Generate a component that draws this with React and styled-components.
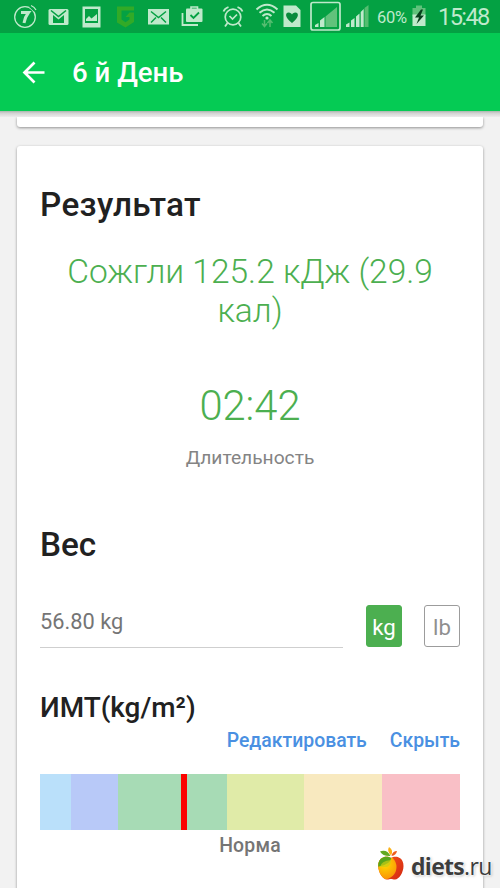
import React from "react";
import styled, { createGlobalStyle } from "styled-components";

const GlobalStyle = createGlobalStyle`
* {
  margin: 0;
  padding: 0;
  box-sizing: border-box;
}

body {
  background: #f2f2f2;
  font-family: Roboto, "Noto Sans", sans-serif;
  overflow: hidden;
}
`;

const Screen = styled.div`
  position: relative;
  display: flex;
  flex-direction: column;
  width: 500px;
  height: 888px;
  overflow: hidden;
  background: #f2f2f2;
`;

const StatusBar = styled.div`
  display: flex;
  align-items: center;
  flex: none;
  height: 33px;
  padding-left: 13px;
  background: #04a143;
  color: #bfe9cb;
`;

const Glyph = styled.svg`
  flex: none;
  display: block;
  height: 33px;
  width: ${(p) => p.$w}px;
  margin-right: ${(p) => p.$gap || 0}px;
  overflow: visible;
`;

const Percent = styled.span`
  width: 35px;
  font-size: 16.5px;
  line-height: 33px;
  padding-top: 1px;
  letter-spacing: -0.3px;
`;

const Clock = styled.span`
  font-size: 23.6px;
  line-height: 33px;
  letter-spacing: -1.6px;
  padding-top: 2px;
`;

const AppBar = styled.header`
  display: flex;
  align-items: center;
  flex: none;
  height: 78px;
  padding-left: 22px;
  background: #05cb54;
  color: #fff;
`;

const BarShadow = styled.div`
  flex: none;
  height: 6px;
  background: linear-gradient(#a9b5ad, #d2d2d2 35%, #ececec);
`;

const BarTitle = styled.h1`
  margin-left: 27px;
  padding-top: 2px;
  font-size: 27.6px;
  font-weight: 500;
  line-height: 34px;
`;

const Content = styled.main`
  display: flex;
  flex-direction: column;
  flex: 1;
  padding: 0 17px;
`;

const Card = styled.section`
  background: #fff;
  border-radius: 3px;
  box-shadow: 0 1px 3px rgba(0, 0, 0, 0.4);
`;

const PreviousCard = styled(Card)`
  flex: none;
  height: 10px;
  margin-bottom: 19px;
  border-radius: 0 0 3px 3px;
  clip-path: inset(0 -6px -6px -6px);
`;

const ResultCard = styled(Card)`
  height: 780px;
  padding: 39px 23px 0;
`;

const Heading = styled.h2`
  font-size: 33.3px;
  font-weight: 500;
  line-height: 40px;
  letter-spacing: ${(p) => p.$spacing || 0}px;
  color: #212121;
`;

const Burned = styled.p`
  margin-top: 27px;
  font-size: 33.5px;
  font-weight: 300;
  line-height: 39px;
  text-align: center;
  color: #4caf50;
`;

const Duration = styled.p`
  margin-top: 52px;
  font-size: 41.7px;
  font-weight: 300;
  line-height: 48px;
  text-align: center;
  color: #4caf50;
`;

const Caption = styled.p`
  margin: 16px 0 55px;
  font-size: 19.2px;
  line-height: 24px;
  text-align: center;
  color: #848484;
`;

const WeightRow = styled.div`
  display: flex;
  height: 43px;
  margin-top: 40px;
`;

const WeightValue = styled.div`
  flex: none;
  width: 303px;
  margin-right: 23px;
  padding-top: 4px;
  border-bottom: 1px solid #cfcfcf;
  font-size: 21.8px;
  line-height: 26px;
  color: #757575;
`;

const Unit = styled.button`
  flex: none;
  width: 36px;
  height: 42px;
  margin-right: 22px;
  border: 1px solid ${(p) => (p.$active ? "#4caf50" : "#9c9c9c")};
  border-radius: 3px;
  background: ${(p) => (p.$active ? "#4caf50" : "#fff")};
  color: ${(p) => (p.$active ? "#fff" : "#8f8f8f")};
  font-family: inherit;
  font-size: 22.2px;
  line-height: 26px;
  padding-top: 2px;

  &:last-child {
    margin-right: 0;
  }
`;

const BmiTitle = styled.h3`
  margin-top: 43px;
  font-size: 27.9px;
  font-weight: 500;
  line-height: 34px;
  color: #212121;
`;

const Links = styled.div`
  display: flex;
  justify-content: flex-end;
  gap: 23px;
  margin-top: 4px;
`;

const TextLink = styled.a`
  font-size: 19.4px;
  font-weight: 500;
  line-height: 24px;
  color: #4a90e2;
`;

const Scale = styled.div`
  position: relative;
  display: flex;
  height: 56px;
  margin-top: 21px;
`;

const Zone = styled.div`
  flex: ${(p) => p.$span};
  background: ${(p) => p.$color};
`;

const Marker = styled.div`
  position: absolute;
  top: 0;
  left: 141px;
  width: 6px;
  height: 100%;
  background: #fb0300;
`;

const ZoneName = styled.p`
  margin-top: 4px;
  font-size: 19.4px;
  font-weight: 500;
  line-height: 24px;
  letter-spacing: 0.2px;
  text-align: center;
  color: #757575;
`;

const Watermark = styled.div`
  position: absolute;
  left: 377px;
  top: 847px;
  display: flex;
  align-items: flex-start;
`;

const WatermarkText = styled.span`
  margin-left: 6px;
  padding-top: 5px;
  font-family: "Open Sans", sans-serif;
  font-size: 23px;
  line-height: 28px;
  letter-spacing: -0.7px;
  color: #3d3d3d;
  white-space: nowrap;
  text-shadow: 0 0 2px #fff, 0 0 2px #fff, 0 0 3px #fff, 1px 1px 3px #aaa;

  b {
    font-weight: 700;
  }
`;

const zones = [
  { span: 2, color: "#bae0fa" },
  { span: 3, color: "#b8c9f8" },
  { span: 7, color: "#a7dbb5" },
  { span: 5, color: "#e0eba8" },
  { span: 5, color: "#f8e9bf" },
  { span: 5, color: "#f9bfc6" },
];

function StatusIcons() {
  const c = "#bfe9cb";
  const bg = "#04a143";
  return (
    <>
      {/* seven */}
      <Glyph $w={24} $gap={11} viewBox="0 0 24 33">
        <circle cx="12" cy="17" r="10.3" fill="none" stroke={c} strokeWidth="1.3" />
        <path d="M17 6.5l5 4.5" stroke={bg} strokeWidth="2" />
        <path d="M18 5.5q3.5 1.5 5 4.5" stroke={c} strokeWidth="1.3" fill="none" />
        <path d="M8 12.5h7.500q-3.500 4.500-4.500 10.500" fill="none" stroke={c} strokeWidth="3" />
      </Glyph>
      {/* gmail */}
      <Glyph $w={21} $gap={13} viewBox="0 0 21 33">
        <rect x="0.500" y="9" width="20" height="16" rx="1.500" fill={c} />
        <path d="M3 10.500l7.500 6 7.500-6" fill="none" stroke={bg} strokeWidth="1.600" />
        <path d="M5 23V15l5.500 4.500L16 15v8z" fill={bg} />
      </Glyph>
      {/* picture */}
      <Glyph $w={19} $gap={15} viewBox="0 0 19 33">
        <path fillRule="evenodd" fill={c} d="M0.500 6.500h18v21h-18zM3 9v14h13V9z" />
        <path d="M4 21v-2l3-3 2.500 2.500 5.500-4.500v7z" fill={c} />
      </Glyph>
      {/* shield */}
      <Glyph $w={19} $gap={13} viewBox="0 0 19 33">
        <path
          d="M1 6.500h17v4H5.500v9l4 2.800 4-2.800v-2.500H9.500l4-4.500H18v9.500L9.500 27.500 1 22.500z"
          fill="#32aa27"
        />
      </Glyph>
      {/* mail */}
      <Glyph $w={21} $gap={12} viewBox="0 0 21 33">
        <rect x="0" y="9" width="21" height="15.500" fill={c} />
        <path d="M3 11.500l7.500 6 7.500-6M3 22.500l5-5M18 22.500l-5-5" fill="none" stroke={bg} strokeWidth="1.500" />
      </Glyph>
      {/* briefcase */}
      <Glyph $w={22} $gap={19} viewBox="0 0 22 33">
        <rect x="5" y="8.500" width="16.500" height="13.500" rx="1" fill={c} />
        <path d="M10 9V7h6.500v2" fill="none" stroke={c} strokeWidth="1.600" />
        <path d="M1.500 13v12h15.500" fill="none" stroke={c} strokeWidth="1.800" />
        <path d="M9.500 15l3 3 5.500-5.500" fill="none" stroke={bg} strokeWidth="1.800" />
      </Glyph>
      {/* alarm */}
      <Glyph $w={22} $gap={12} viewBox="0 0 22 33">
        <circle cx="11" cy="17" r="7.800" fill="none" stroke={c} strokeWidth="1.700" />
        <path d="M1.500 11.500q1-3 5-4.500M20.500 11.500q-1-3-5-4.500" fill="none" stroke={c} strokeWidth="1.800" />
        <path d="M5.500 23l-2.500 3.500M16.500 23l2.500 3.500" stroke={c} strokeWidth="1.800" />
        <path d="M7.500 16l3 3 4.500-4.500" fill="none" stroke={c} strokeWidth="1.700" />
      </Glyph>
      {/* wifi */}
      <Glyph $w={22} $gap={5} viewBox="0 0 22 33">
        <g fill="none" stroke={c} strokeWidth="2">
          <path d="M0.500 9.500q10.500-9.500 21 0" />
          <path d="M3.500 12.800q7.500-6.600 15 0" />
          <path d="M6.500 16q4.500-4 9 0" />
        </g>
        <circle cx="11" cy="18" r="1.600" fill={c} />
        <path d="M8.500 20v6M6 23.500l2.500 3 2.500-3M14 27v-6.500M11.500 23l2.500-3 2.500 3" fill="none" stroke="#55bd70" strokeWidth="1.500" />
      </Glyph>
      {/* sim with heart */}
      <Glyph $w={18} $gap={9} viewBox="0 0 18 33">
        <path d="M0.500 5.500h12.500l4.500 4.500v17h-17z" fill={c} />
        <path d="M9 23c-8-6-6.500-10.500-3.500-10.500 2 0 3 1.200 3.500 2 .5-.8 1.500-2 3.500-2 3 0 4.500 4.500-3.500 10.500z" fill="#078a3b" />
      </Glyph>
      {/* boxed signal */}
      <Glyph $w={31} $gap={5} viewBox="0 0 31 33">
        <rect x="1" y="2.500" width="29" height="27.500" rx="2" fill="none" stroke={c} strokeWidth="1.700" />
        <path d="M5 27v-2l3.500-2v4zM10 27v-6.500l4.500-3.500v10z" fill={c} />
        <path d="M15.500 16.500L27 7v20H15.500z" fill="#62c27c" />
      </Glyph>
      {/* signal */}
      <Glyph $w={23} $gap={8} viewBox="0 0 23 33">
        <path d="M0 27v-2.500l3.500-2V27zM5 27v-6.500l3.500-2.500v9zM10 27V16.500l3.500-3V27zM14.700 27V12l3-3v18z" fill={c} />
        <path d="M18.500 27V8l4-3v22z" fill="#55bd70" />
      </Glyph>
    </>
  );
}

function BatteryIcon() {
  return (
    <Glyph $w={14} $gap={12} viewBox="0 0 14 33">
      <path d="M4 5.500h6V8h3.500v8H0.500V8H4z" fill="#5fc27b" />
      <rect x="0.500" y="14.500" width="13" height="11.500" fill="#bfe9cb" />
      <path d="M9 9.500L3 17.500h4l-2.500 6.500L12 15.500H8.500L11 9.500z" fill="#073f1c" />
    </Glyph>
  );
}

function BackArrow() {
  return (
    <svg width="23" height="24" viewBox="0 0 23 24" fill="none" stroke="#fff" strokeWidth="2.700">
      <path d="M22.500 12.500H2.500M12.500 2.500l-10 10 10 10" />
    </svg>
  );
}

function Apple() {
  return (
    <svg width="28" height="35" viewBox="0 0 28 35">
      <defs>
        <linearGradient id="skin" x1="0" y1="0" x2="1" y2="1">
          <stop offset="0.300" stopColor="#f4511b" />
          <stop offset="1" stopColor="#cf2410" />
        </linearGradient>
        <radialGradient id="flesh" cx="0.550" cy="0.400" r="0.650">
          <stop offset="0" stopColor="#ffd900" />
          <stop offset="1" stopColor="#f98b08" />
        </radialGradient>
        <clipPath id="body">
          <path d="M14 11C18 8.500 26.500 9.500 26.500 19 26.500 25.500 22 32.500 18 32.500c-2 0-2.500-.6-4-.6s-2 .6-4 .6C6 32.500 1.200 25.500 1.200 19 1.200 9.500 10 8.500 14 11z" />
        </clipPath>
      </defs>
      <g clipPath="url(#body)">
        <rect width="28" height="35" fill="url(#skin)" />
        <circle cx="7" cy="20" r="12.500" fill="url(#flesh)" />
        <path d="M0 20V8h14q1 5-3 8T0 20z" fill="#58a51c" />
        <path d="M3 20q1-6 11-7 0 5-4 7z" fill="#c9cc16" opacity="0.700" />
      </g>
      <path d="M13.500 9Q10 2 3 4.500q3 5 10.500 4.500z" fill="#63a820" />
      <path d="M14 8.500Q9.500 4 12 0q5 3 2 8.500z" fill="#fbb116" />
      <path d="M14.500 9q1-5 5.500-5-1 4.500-5.500 5z" fill="#ef5b1c" />
    </svg>
  );
}

export default function App() {
  return (
    <Screen>
      <GlobalStyle />
      <StatusBar>
        <StatusIcons />
        <Percent>60%</Percent>
        <BatteryIcon />
        <Clock>15:48</Clock>
      </StatusBar>

      <AppBar>
        <BackArrow />
        <BarTitle>6 й День</BarTitle>
      </AppBar>
      <BarShadow />

      <Content>
        <PreviousCard />
        <ResultCard>
          <Heading $spacing={0.35}>Результат</Heading>
          <Burned>Сожгли 125.2 кДж (29.9 кал)</Burned>
          <Duration>02:42</Duration>
          <Caption>Длительность</Caption>

          <Heading>Вес</Heading>
          <WeightRow>
            <WeightValue>56.80 kg</WeightValue>
            <Unit $active>kg</Unit>
            <Unit>lb</Unit>
          </WeightRow>

          <BmiTitle>ИМТ(kg/m²)</BmiTitle>
          <Links>
            <TextLink>Редактировать</TextLink>
            <TextLink>Скрыть</TextLink>
          </Links>
          <Scale>
            {zones.map((zone) => (
              <Zone key={zone.color} $span={zone.span} $color={zone.color} />
            ))}
            <Marker />
          </Scale>
          <ZoneName>Норма</ZoneName>
        </ResultCard>
      </Content>

      <Watermark>
        <Apple />
        <WatermarkText>
          <b>diets</b>.ru
        </WatermarkText>
      </Watermark>
    </Screen>
  );
}
